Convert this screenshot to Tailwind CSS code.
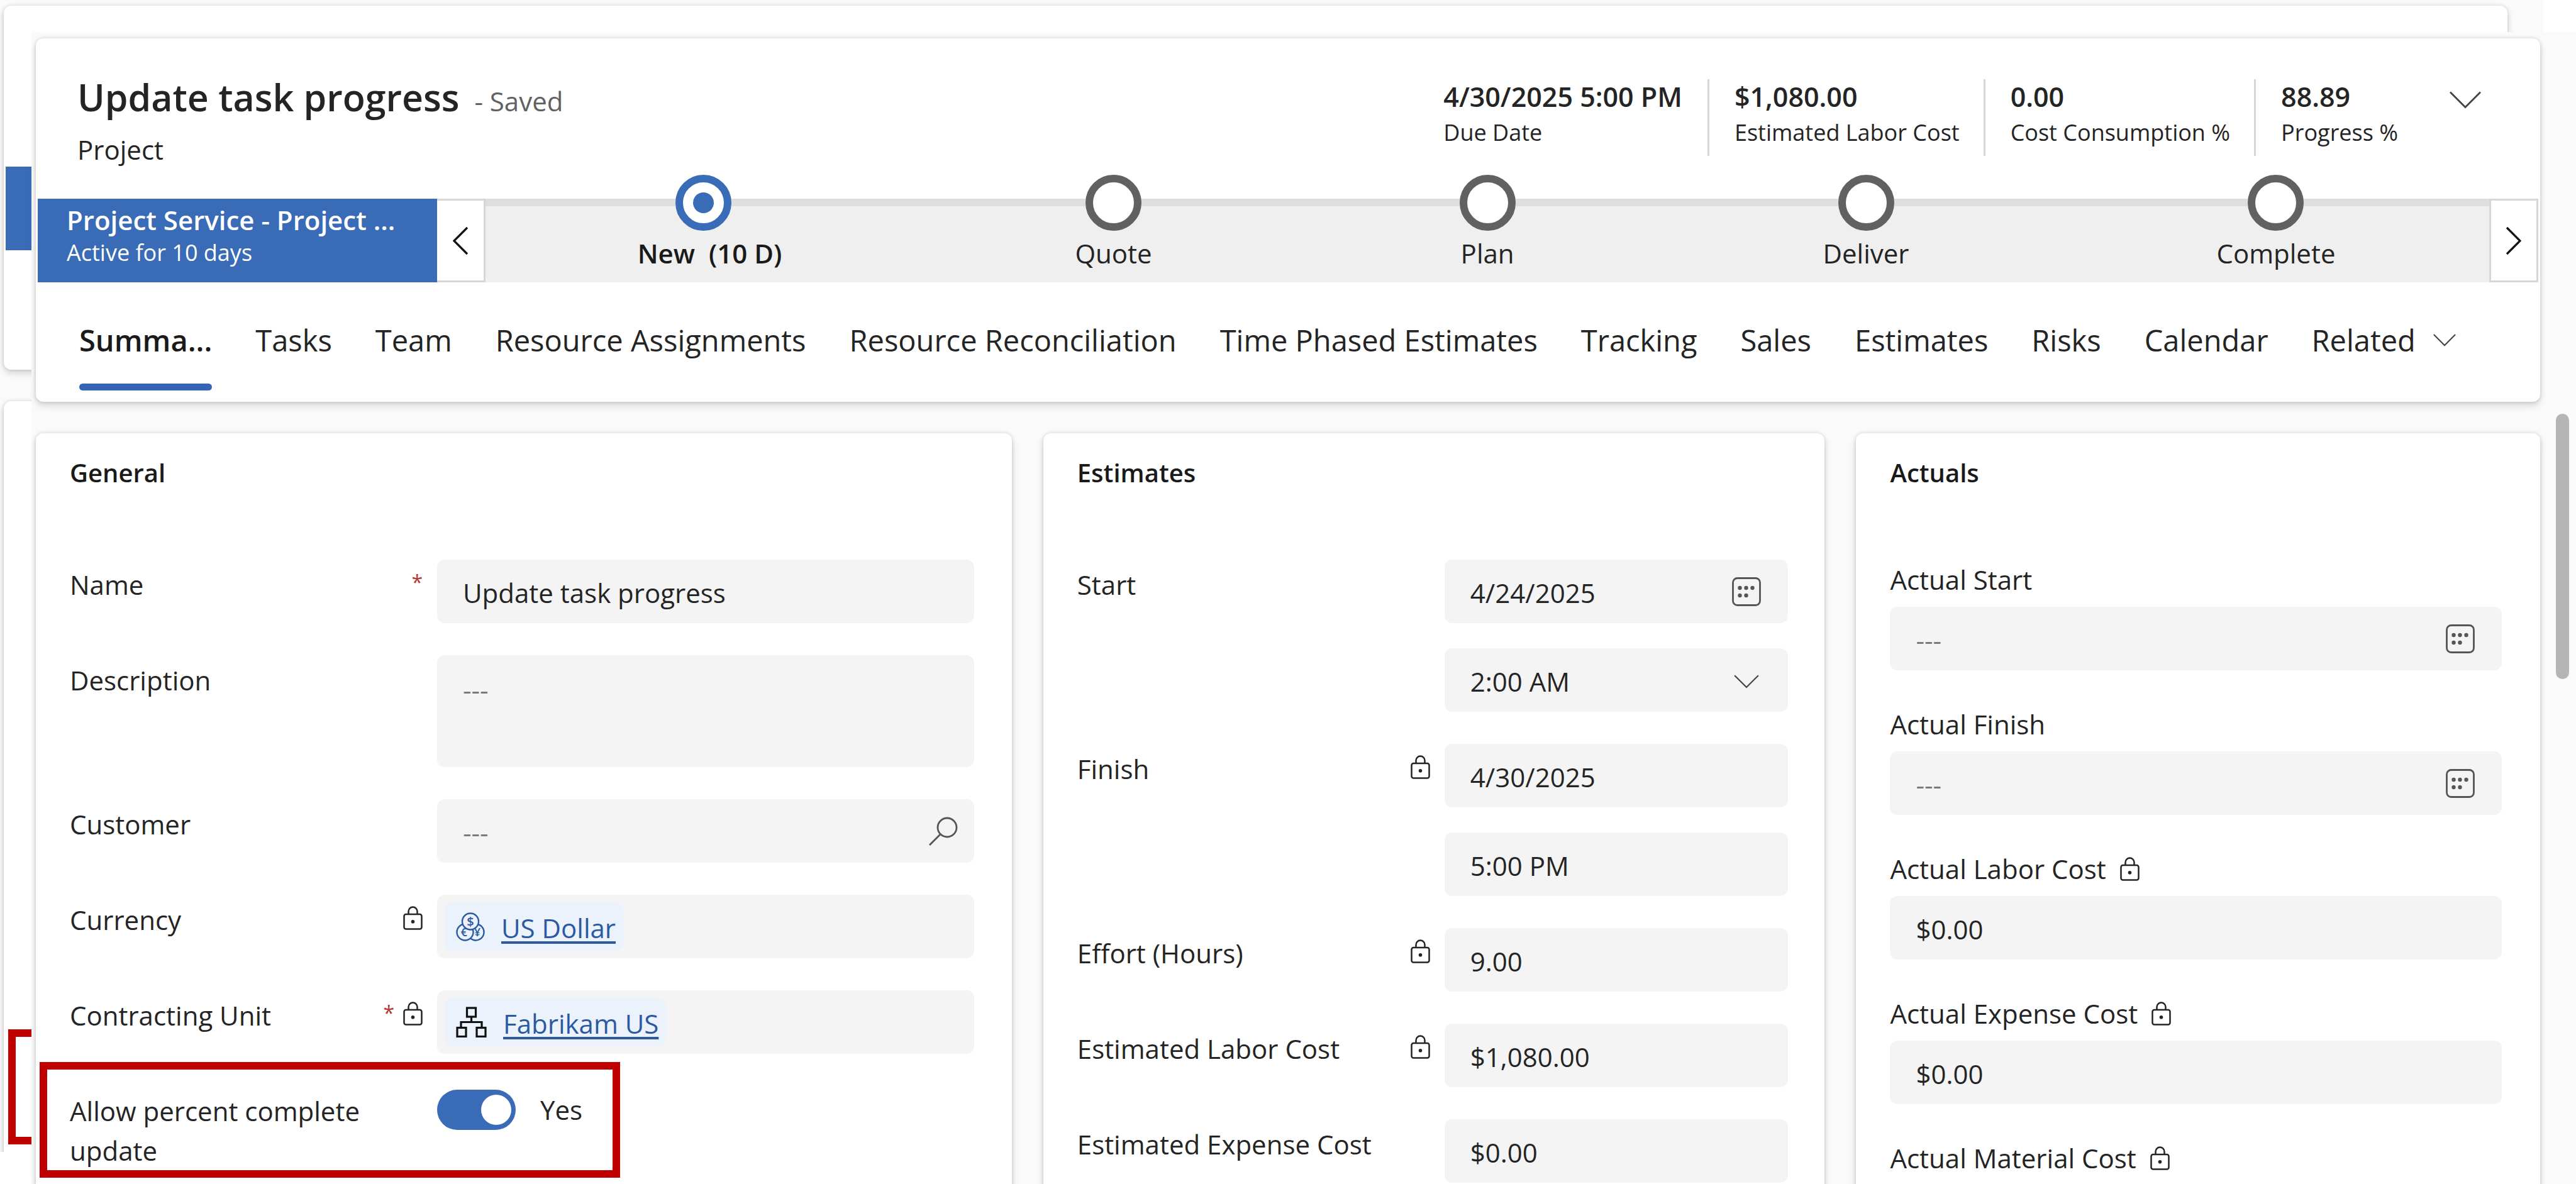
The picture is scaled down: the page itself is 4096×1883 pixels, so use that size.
<!DOCTYPE html>
<html lang="en">
<head>
<meta charset="utf-8">
<title>Update task progress - Project</title>
<script src="https://cdn.jsdelivr.net/npm/@tailwindcss/browser@4"></script>
</head>
<body class="bg-white font-['Open_Sans','Noto_Sans',sans-serif] text-[42px] leading-[63px] text-[#242424]">
<svg class="hidden" aria-hidden="true">
  <symbol id="lock" viewBox="0 0 31 38"><path d="M8.500 13V8.500a7 7 0 0 1 14 0V13" fill="none" stroke="currentColor" stroke-width="2.500"/><rect x="1.500" y="13" width="28" height="23.500" rx="3" fill="none" stroke="currentColor" stroke-width="2.500"/><circle cx="15.500" cy="24.800" r="2.800" fill="currentColor"/></symbol>
  <symbol id="calendar" viewBox="0 0 46 46"><rect x="1.500" y="1.500" width="43" height="43" rx="7" fill="none" stroke="currentColor" stroke-width="2.800"/><g fill="currentColor"><circle cx="12.500" cy="17" r="3.200"/><circle cx="22.500" cy="17" r="3.200"/><circle cx="32.500" cy="17" r="3.200"/><circle cx="12.500" cy="29" r="3.200"/><circle cx="22.500" cy="29" r="3.200"/></g></symbol>
  <symbol id="chevron" viewBox="0 0 50 28"><path d="M1 1.500 25 25.500 49 1.500" fill="none" stroke="currentColor" stroke-width="2.800"/></symbol>
</svg>

<div class="relative flex h-screen flex-col overflow-hidden">

  <!-- Window behind the form -->
  <div class="absolute top-0 bottom-[51px] left-0 right-[52px] overflow-hidden bg-[#fafafa]" aria-hidden="true">
    <div class="absolute left-[6px] right-[57px] top-[9px] h-[579px] rounded-xl bg-white shadow-[0_0_6px_rgba(0,0,0,0.14),0_6px_12px_rgba(0,0,0,0.14)]"></div>
    <div class="absolute left-[9px] top-[265px] h-[133px] w-[200px] bg-[#3a6bb7]"></div>
    <div class="absolute left-[6px] top-[638px] -bottom-5 w-[400px] rounded-xl bg-white shadow-[0_0_6px_rgba(0,0,0,0.14),0_6px_12px_rgba(0,0,0,0.14)]"></div>
    <div class="absolute left-[13px] top-[1637px] h-[183px] w-[400px] border-[12px] border-[#c00000]"></div>
  </div>

  <!-- Form -->
  <main class="relative mt-[51px] ml-[50px] flex min-h-0 flex-1 flex-col bg-[#fafafa] pt-[10px] pr-[57px] pl-[7px]">

    <header class="shrink-0 rounded-xl bg-white px-[3px] pb-[18px] shadow-[0_0_6px_rgba(0,0,0,0.14),0_6px_12px_rgba(0,0,0,0.14)]">
      <div class="flex justify-between pt-[53px] pr-[91px] pb-[50px] pl-[63px]">
        <div>
          <div class="flex items-baseline gap-6">
            <h1 class="text-[59px] leading-[80px] font-semibold">Update task progress</h1>
            <span class="leading-[56px] text-[#616161]">- Saved</span>
          </div>
          <p class="mt-4 leading-[56px]">Project</p>
        </div>
        <div class="flex items-start pt-3">
          <dl class="flex leading-[56px]">
            <div class="h-[122px] pr-[40px]"><dd class="text-[43px] font-semibold">4/30/2025 5:00 PM</dd><dt class="pt-[5px] text-[36px] leading-[48px]">Due Date</dt></div>
            <div class="h-[122px] border-l-[3px] border-[#d6d6d6] pr-[38px] pl-[40px]"><dd class="text-[43px] font-semibold">$1,080.00</dd><dt class="pt-[5px] text-[36px] leading-[48px]">Estimated Labor Cost</dt></div>
            <div class="h-[122px] border-l-[3px] border-[#d6d6d6] pr-[38px] pl-[40px]"><dd class="text-[43px] font-semibold">0.00</dd><dt class="pt-[5px] text-[36px] leading-[48px]">Cost Consumption %</dt></div>
            <div class="h-[122px] border-l-[3px] border-[#d6d6d6] pr-[38px] pl-[40px]"><dd class="text-[43px] font-semibold">88.89</dd><dt class="pt-[5px] text-[36px] leading-[48px]">Progress %</dt></div>
          </dl>
          <button class="mt-[19px] ml-[44px]" aria-label="Expand header"><svg class="h-7 w-[50px] text-[#424242]"><use href="#chevron"/></svg></button>
        </div>
      </div>

      <div class="flex h-[133px]">
        <button class="w-[635px] bg-[#3a6bb7] pt-[6px] pl-[46px] text-left text-white">
          <span class="block leading-[56px] font-semibold whitespace-nowrap">Project Service - Project ...</span>
          <span class="block pb-[23px] text-[36px] leading-[48px]">Active for 10 days</span>
        </button>
        <button class="flex w-[77px] items-center justify-center border-[3px] border-l-0 border-[#d6d6d6] bg-white" aria-label="Previous stage"><svg class="h-[46px] w-[26px]" viewBox="0 0 26 46"><path d="M24 2 3 23l21 21" fill="none" stroke="#111" stroke-width="3.200"/></svg></button>
        <ol class="flex flex-1 justify-around border-t-[12px] border-[#dedede] bg-[#efefef] leading-[56px] whitespace-nowrap">
          <li class="-mt-[50px] flex w-[204px] flex-col items-center gap-2 font-semibold text-[#1a1a1a]"><span class="flex size-[89px] shrink-0 items-center justify-center rounded-full border-[12px] border-[#3a6bb7] bg-white"><span class="size-[33px] rounded-full bg-[#3a6bb7]"></span></span><span class="pl-5 whitespace-pre">New  (10 D)</span></li>
          <li class="-mt-[50px] flex flex-col items-center gap-2"><span class="size-[89px] shrink-0 rounded-full border-[12px] border-[#616161] bg-white"></span>Quote</li>
          <li class="-mt-[50px] flex flex-col items-center gap-2"><span class="size-[89px] shrink-0 rounded-full border-[12px] border-[#616161] bg-white"></span>Plan</li>
          <li class="-mt-[50px] flex flex-col items-center gap-2"><span class="size-[89px] shrink-0 rounded-full border-[12px] border-[#616161] bg-white"></span>Deliver</li>
          <li class="-mt-[50px] flex flex-col items-center gap-2"><span class="size-[89px] shrink-0 rounded-full border-[12px] border-[#616161] bg-white"></span>Complete</li>
        </ol>
        <button class="flex w-[78px] items-center justify-center border-[3px] border-[#d6d6d6] bg-white" aria-label="Next stage"><svg class="h-[46px] w-[26px]" viewBox="0 0 26 46"><path d="m2 2 21 21L2 44" fill="none" stroke="#111" stroke-width="3.200"/></svg></button>
      </div>

      <nav class="mt-[60px] ml-[66px] flex items-start gap-[69px] text-[47px] leading-[64px] whitespace-nowrap">
        <a href="#" class="font-semibold text-[#1a1a1a]">Summa...<span class="mt-[37px] block h-[11px] rounded-full bg-[#3465b5]"></span></a>
        <a href="#">Tasks</a>
        <a href="#">Team</a>
        <a href="#">Resource Assignments</a>
        <a href="#">Resource Reconciliation</a>
        <a href="#">Time Phased Estimates</a>
        <a href="#">Tracking</a>
        <a href="#">Sales</a>
        <a href="#">Estimates</a>
        <a href="#">Risks</a>
        <a href="#">Calendar</a>
        <a href="#" class="flex items-center gap-7">Related<svg class="h-5 w-[36px] text-[#424242]"><use href="#chevron"/></svg></a>
      </nav>
    </header>

    <div class="mt-[50px] grid min-h-0 flex-1 grid-cols-[minmax(0,1551fr)_minmax(0,1242fr)_minmax(0,1087fr)] gap-[50px]">

      <section class="-mb-5 min-h-0 rounded-xl bg-white pt-[35px] pr-[60px] pl-[54px] shadow-[0_0_6px_rgba(0,0,0,0.14),0_6px_12px_rgba(0,0,0,0.14)]">
        <h2 class="text-[40px] leading-[56px] font-semibold text-[#1a1a1a]">General</h2>
        <div class="mt-[110px] grid grid-cols-[584px_minmax(0,1fr)] gap-y-[51px]">
          <div class="flex items-start justify-between pr-[23px]"><label for="name" class="pt-2">Name</label><span class="pt-1 text-[32px] text-[#b33634]">*</span></div>
          <input id="name" type="text" value="Update task progress" class="h-[101px] w-full rounded-xl bg-[#f4f4f4] px-[41px] pt-1">

          <label for="description" class="pt-2">Description</label>
          <textarea id="description" placeholder="---" class="block h-[178px] w-full resize-none rounded-xl bg-[#f4f4f4] px-[41px] pt-[23px] placeholder:text-[#7a7a7a]"></textarea>

          <label for="customer" class="pt-2">Customer</label>
          <div class="flex h-[101px] items-center rounded-xl bg-[#f4f4f4] pr-[26px]">
            <input id="customer" type="text" placeholder="---" class="h-full min-w-0 flex-1 pt-1 pl-[41px] placeholder:text-[#7a7a7a]">
            <button aria-label="Search customer"><svg class="size-[46px]" viewBox="0 0 46 46" fill="none" stroke="#555" stroke-width="2.800"><circle cx="29" cy="17" r="15"/><path d="M18.500 27.500 1 45"/></svg></button>
          </div>

          <div class="flex items-start justify-between pr-[23px]"><span class="pt-2">Currency</span><svg class="mt-[18px] h-[38px] w-[31px]"><use href="#lock"/></svg></div>
          <div class="flex h-[101px] items-center rounded-xl bg-[#f4f4f4] px-3">
            <a href="#" class="flex h-[77px] items-center gap-[26px] rounded-xl bg-[#ebf2fb] pr-3 pl-[18px] text-[#2b5aa3]">
              <svg class="size-[46px]" viewBox="0 0 46 46" fill="#ebf2fb" stroke="#2b5aa3" stroke-width="2.400"><circle cx="31.500" cy="31.500" r="13"/><circle cx="14.500" cy="31.500" r="13"/><circle cx="23" cy="14.500" r="13"/><g fill="#2b5aa3" stroke="none" font-weight="600" text-anchor="middle"><text x="23" y="22" font-size="20">$</text><text x="13" y="38" font-size="18">€</text><text x="34" y="38" font-size="18">¥</text></g></svg>
              <span class="pt-1 underline decoration-[4px] underline-offset-[5px]">US Dollar</span>
            </a>
          </div>

          <div class="flex items-start justify-between pr-[23px]"><span class="pt-2">Contracting Unit</span><span class="flex items-start gap-[14px]"><span class="pt-1 text-[32px] text-[#b33634]">*</span><svg class="mt-[18px] h-[38px] w-[31px]"><use href="#lock"/></svg></span></div>
          <div class="flex h-[101px] items-center rounded-xl bg-[#f4f4f4] px-3">
            <a href="#" class="flex h-[77px] items-center gap-[26px] rounded-xl bg-[#ebf2fb] pr-3 pl-[18px] text-[#2b5aa3]">
              <svg class="size-[49px]" viewBox="0 0 49 49" fill="none" stroke="#111" stroke-width="3.200"><rect x="17.500" y="2" width="14" height="14"/><rect x="2" y="33.500" width="14" height="14"/><rect x="33" y="33.500" width="14" height="14"/><path d="M24.500 16v8M8 33.500V24.500h33v9"/></svg>
              <span class="pt-1 underline decoration-[4px] underline-offset-[5px]">Fabrikam US</span>
            </a>
          </div>

          <label for="allow" class="relative pt-2 pr-[100px]">Allow percent complete update
            <!-- Highlight frame -->
            <span class="pointer-events-none absolute -left-[48px] -top-[38px] h-[184px] w-[923px] border-[12px] border-[#c00000]"></span>
          </label>
          <div class="flex items-start gap-[39px] pt-[6px]">
            <input id="allow" type="checkbox" role="switch" checked class="h-16 w-[125px] appearance-none rounded-full bg-[#3a6bb7] pt-2 pl-[70px] before:block before:size-12 before:rounded-full before:bg-white before:content-['']">
            <span>Yes</span>
          </div>
        </div>
      </section>

      <section class="-mb-5 min-h-0 rounded-xl bg-white pt-[35px] pr-[58px] pl-[54px] shadow-[0_0_6px_rgba(0,0,0,0.14),0_6px_12px_rgba(0,0,0,0.14)]">
        <h2 class="text-[40px] leading-[56px] font-semibold text-[#1a1a1a]">Estimates</h2>
        <div class="mt-[110px] grid grid-cols-[584px_minmax(0,1fr)] gap-y-[51px]">
          <label for="start" class="pt-2">Start</label>
          <div class="flex flex-col gap-10">
            <div class="flex h-[101px] items-center rounded-xl bg-[#f4f4f4] pr-[43px]">
              <input id="start" type="text" value="4/24/2025" class="h-full min-w-0 flex-1 pt-1 pl-[41px]">
              <button aria-label="Pick start date"><svg class="size-[46px] text-[#555]"><use href="#calendar"/></svg></button>
            </div>
            <div class="relative">
              <select aria-label="Start time" class="block h-[101px] w-full appearance-none rounded-xl bg-[#f4f4f4] pt-1 pl-[41px]"><option>2:00 AM</option></select>
              <svg class="pointer-events-none absolute top-[42px] right-[46px] h-[22px] w-10 text-[#424242]"><use href="#chevron"/></svg>
            </div>
          </div>

          <div class="flex items-start justify-between pr-[23px]"><label for="finish" class="pt-2">Finish</label><svg class="mt-[18px] h-[38px] w-[31px]"><use href="#lock"/></svg></div>
          <div class="flex flex-col gap-10">
            <input id="finish" type="text" readonly value="4/30/2025" class="h-[101px] w-full rounded-xl bg-[#f4f4f4] px-[41px] pt-1">
            <input aria-label="Finish time" type="text" readonly value="5:00 PM" class="h-[101px] w-full rounded-xl bg-[#f4f4f4] px-[41px] pt-1">
          </div>

          <div class="flex items-start justify-between pr-[23px]"><label for="effort" class="pt-2">Effort (Hours)</label><svg class="mt-[18px] h-[38px] w-[31px]"><use href="#lock"/></svg></div>
          <input id="effort" type="text" readonly value="9.00" class="h-[101px] w-full rounded-xl bg-[#f4f4f4] px-[41px] pt-1">

          <div class="flex items-start justify-between pr-[23px]"><label for="elabor" class="pt-2">Estimated Labor Cost</label><svg class="mt-[18px] h-[38px] w-[31px]"><use href="#lock"/></svg></div>
          <input id="elabor" type="text" readonly value="$1,080.00" class="h-[101px] w-full rounded-xl bg-[#f4f4f4] px-[41px] pt-1">

          <label for="eexpense" class="pt-2">Estimated Expense Cost</label>
          <input id="eexpense" type="text" value="$0.00" class="h-[101px] w-full rounded-xl bg-[#f4f4f4] px-[41px] pt-1">
        </div>
      </section>

      <section class="-mb-5 min-h-0 rounded-xl bg-white pt-[35px] pr-[61px] pl-[54px] shadow-[0_0_6px_rgba(0,0,0,0.14),0_6px_12px_rgba(0,0,0,0.14)]">
        <h2 class="text-[40px] leading-[56px] font-semibold text-[#1a1a1a]">Actuals</h2>
        <div class="mt-[110px] flex flex-col gap-[54px]">
          <div>
            <label for="astart" class="mb-3 block">Actual Start</label>
            <div class="flex h-[101px] items-center rounded-xl bg-[#f4f4f4] pr-[43px]">
              <input id="astart" type="text" placeholder="---" class="h-full min-w-0 flex-1 pt-1 pl-[41px] placeholder:text-[#7a7a7a]">
              <button aria-label="Pick actual start"><svg class="size-[46px] text-[#555]"><use href="#calendar"/></svg></button>
            </div>
          </div>
          <div>
            <label for="afinish" class="mb-3 block">Actual Finish</label>
            <div class="flex h-[101px] items-center rounded-xl bg-[#f4f4f4] pr-[43px]">
              <input id="afinish" type="text" placeholder="---" class="h-full min-w-0 flex-1 pt-1 pl-[41px] placeholder:text-[#7a7a7a]">
              <button aria-label="Pick actual finish"><svg class="size-[46px] text-[#555]"><use href="#calendar"/></svg></button>
            </div>
          </div>
          <div>
            <label for="alabor" class="mb-3 flex items-center gap-[22px]">Actual Labor Cost<svg class="h-[38px] w-[31px]"><use href="#lock"/></svg></label>
            <input id="alabor" type="text" readonly value="$0.00" class="block h-[101px] w-full rounded-xl bg-[#f4f4f4] px-[41px] pt-1">
          </div>
          <div>
            <label for="aexpense" class="mb-3 flex items-center gap-[22px]">Actual Expense Cost<svg class="h-[38px] w-[31px]"><use href="#lock"/></svg></label>
            <input id="aexpense" type="text" readonly value="$0.00" class="block h-[101px] w-full rounded-xl bg-[#f4f4f4] px-[41px] pt-1">
          </div>
          <div>
            <label for="amaterial" class="mb-3 flex items-center gap-[22px]">Actual Material Cost<svg class="h-[38px] w-[31px]"><use href="#lock"/></svg></label>
            <input id="amaterial" type="text" readonly class="block h-[101px] w-full rounded-xl bg-[#f4f4f4] px-[41px] pt-1">
          </div>
        </div>
      </section>
    </div>

    <!-- Scroll thumb -->
    <div class="absolute top-[607px] right-[11px] h-[422px] w-[21px] rounded-full bg-[#b5b5b5]"></div>
  </main>
</div>
</body>
</html>
